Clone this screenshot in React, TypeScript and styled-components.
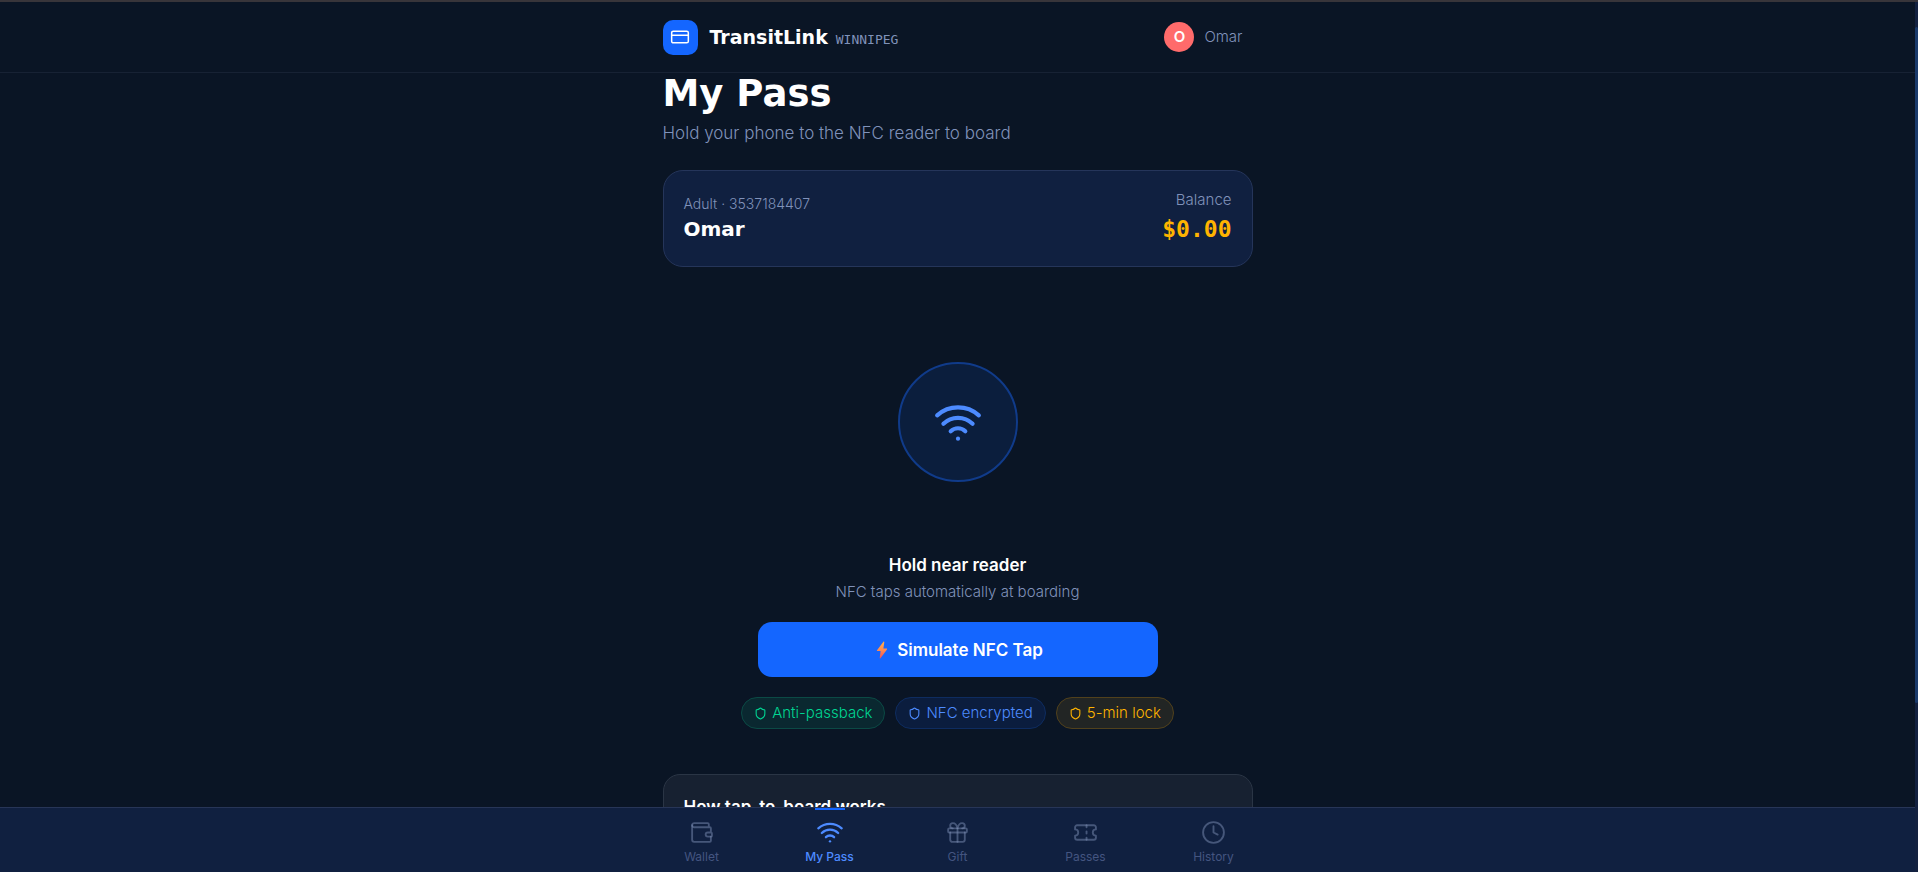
import React from "react";
import styled, { createGlobalStyle } from "styled-components";
import { Clock, CreditCard, Gift, Shield, Ticket, Wallet, Wifi } from "lucide-react";

const display = '"DejaVu Sans", sans-serif';
const mono = '"DejaVu Sans Mono", monospace';
const muted = "#8092ba";

const GlobalStyle = createGlobalStyle`
  *, *::before, *::after { box-sizing: border-box; }
  body {
    margin: 0;
    background: #0a1525;
    color: #ffffff;
    font-family: Inter, sans-serif;
    font-size: 15px;
    line-height: 20px;
    -webkit-font-smoothing: antialiased;
  }
  h1, h2, h3, p { margin: 0; }
`;

const Shell = styled.div`
  display: flex;
  height: 100vh;
  border-top: 2px solid #38353a;
`;

const Screen = styled.div`
  flex: 1;
  min-width: 0;
  display: flex;
  flex-direction: column;
`;

const ScrollRail = styled.div`
  width: 3px;
  padding-top: 25px;
  background: #132140;
`;

const ScrollThumb = styled.div`
  height: 80%;
  border-radius: 2px;
  background: #1a3a6b;
`;

const TopBar = styled.header`
  flex: none;
  border-bottom: 1px solid #172234;
`;

const Column = styled.div`
  width: 100%;
  max-width: 640px;
  margin: 0 auto;
  padding: 0 25px;
`;

const TopBarRow = styled(Column)`
  height: 70px;
  display: flex;
  align-items: center;
  justify-content: space-between;
`;

const Brand = styled.a`
  display: flex;
  align-items: center;
  gap: 12px;
  color: inherit;
  text-decoration: none;
`;

const BrandMark = styled.span`
  width: 35px;
  height: 35px;
  border-radius: 10px;
  background: #1466ff;
  display: grid;
  place-items: center;
`;

const BrandText = styled.span`
  display: flex;
  align-items: baseline;
  gap: 8px;
`;

const BrandName = styled.span`
  font: 700 19px/24px ${display};
`;

const City = styled.span`
  font: 400 13px/16px ${mono};
  color: ${muted};
`;

const Account = styled.button`
  display: flex;
  align-items: center;
  gap: 10px;
  padding: 0 10px 0 0;
  border: 0;
  background: none;
  color: ${muted};
  font: 300 15px/20px Inter, sans-serif;
  cursor: pointer;
`;

const Avatar = styled.span`
  width: 30px;
  height: 30px;
  border-radius: 50%;
  background: #ff6b6b;
  color: #ffffff;
  font-weight: 600;
  display: grid;
  place-items: center;
`;

const Content = styled.main`
  flex: 1;
  min-height: 0;
  overflow-y: auto;
  scrollbar-width: none;
`;

const Title = styled.h1`
  font: 700 37px/42px ${display};
`;

const Subtitle = styled.p`
  margin-top: 6px;
  font-size: 17px;
  line-height: 24px;
  font-weight: 300;
  color: ${muted};
`;

const HolderCard = styled.section`
  margin-top: 25px;
  height: 97px;
  padding: 0 20px 2px;
  border: 1px solid #25355a;
  border-radius: 20px;
  background: #102040;
  display: flex;
  align-items: center;
  justify-content: space-between;
`;

const Stack = styled.div<{ $end?: boolean }>`
  display: flex;
  flex-direction: column;
  align-items: ${(p) => (p.$end ? "flex-end" : "flex-start")};
  gap: 3px;
`;

const Muted = styled.span<{ $small?: boolean }>`
  font-size: ${(p) => (p.$small ? "14px" : "15px")};
  font-weight: 300;
  color: ${muted};
`;

const HolderName = styled.strong`
  font: 700 20px/24px ${display};
`;

const Balance = styled.strong`
  font: 700 23px/32px ${mono};
  color: #ffb400;
`;

const Reader = styled.section`
  display: flex;
  flex-direction: column;
  align-items: center;
  padding: 95px 0 45px;
`;

const ReaderDisc = styled.div`
  width: 120px;
  height: 120px;
  border: 2px solid #103b8a;
  border-radius: 50%;
  background: #0b1e3d;
  color: #4d8bff;
  display: grid;
  place-items: center;
`;

const ReaderTitle = styled.h2`
  margin-top: 71px;
  font-size: 17px;
  line-height: 24px;
  font-weight: 600;
`;

const ReaderHint = styled.p`
  margin-top: 5px;
  font-weight: 300;
  color: ${muted};
`;

const TapButton = styled.button`
  margin-top: 20px;
  width: 400px;
  max-width: 100%;
  height: 55px;
  border: 0;
  border-radius: 14px;
  background: #1466ff;
  color: #ffffff;
  font: 600 17px/24px Inter, sans-serif;
  display: flex;
  align-items: center;
  justify-content: center;
  gap: 5px;
  cursor: pointer;
`;

const Badges = styled.ul`
  margin: 20px 0 0;
  padding: 0;
  list-style: none;
  display: flex;
  flex-wrap: wrap;
  justify-content: center;
  gap: 10px;
`;

const tones = {
  green: { text: "#00d492", fill: "#0a2830", line: "#0b4a45" },
  blue: { text: "#4d8bff", fill: "#0b1d3e", line: "#0e2c60" },
  amber: { text: "#ffb400", fill: "#222524", line: "#51411c" },
};

const Badge = styled.li<{ $tone: keyof typeof tones }>`
  height: 32px;
  padding: 0 12px;
  border: 1px solid ${(p) => tones[p.$tone].line};
  border-radius: 16px;
  background: ${(p) => tones[p.$tone].fill};
  color: ${(p) => tones[p.$tone].text};
  font-weight: 300;
  display: flex;
  align-items: center;
  gap: 5px;
`;

const InfoCard = styled.section`
  min-height: 200px;
  padding: 20px;
  border: 1px solid #2a3545;
  border-radius: 17px;
  background: #172131;
`;

const InfoTitle = styled.h3`
  font-size: 17px;
  line-height: 24px;
  font-weight: 600;
`;

const TabBar = styled.nav`
  flex: none;
  border-top: 1px solid #273557;
  background: #102040;
`;

const Tabs = styled.div`
  max-width: 640px;
  height: 64px;
  margin: 0 auto;
  display: grid;
  grid-template-columns: repeat(5, 1fr);
`;

const Tab = styled.a<{ $active?: boolean }>`
  position: relative;
  padding-top: 10px;
  display: flex;
  flex-direction: column;
  align-items: center;
  gap: 3px;
  font-size: 12px;
  line-height: 16px;
  font-weight: ${(p) => (p.$active ? 500 : 400)};
  color: ${(p) => (p.$active ? "#4d8bff" : "#445580")};
  text-decoration: none;

  &::before {
    content: "";
    display: ${(p) => (p.$active ? "block" : "none")};
    position: absolute;
    top: 0;
    width: 30px;
    height: 2px;
    background: #1466ff;
  }
`;

const TabIcon = styled.span<{ $active?: boolean }>`
  height: 28px;
  display: grid;
  place-items: center;
  color: ${(p) => (p.$active ? "#4d8bff" : "rgba(123, 141, 180, 0.5)")};
`;

const Bolt = () => (
  <svg width="20" height="18" viewBox="-4 0 20 18" aria-hidden="true">
    <defs>
      <linearGradient id="bolt" x1="0" y1="0" x2="0" y2="1">
        <stop offset="0" stopColor="#ffb04a" />
        <stop offset="0.5" stopColor="#ff8a50" />
        <stop offset="1" stopColor="#f0505a" />
      </linearGradient>
    </defs>
    <path
      d="M7.4.8 1 9.3c-.3.4 0 .8.4.8h3.2L3.7 17c-.1.5.5.7.8.3L11 8.5c.3-.4 0-.9-.4-.9H7.4L8.3 1.2c.1-.5-.5-.8-.9-.4z"
      fill="url(#bolt)"
    />
  </svg>
);

const tabs = [
  { label: "Wallet", icon: Wallet },
  { label: "My Pass", icon: Wifi, active: true },
  { label: "Gift", icon: Gift },
  { label: "Passes", icon: Ticket },
  { label: "History", icon: Clock },
];

const badges: { label: string; tone: keyof typeof tones }[] = [
  { label: "Anti-passback", tone: "green" },
  { label: "NFC encrypted", tone: "blue" },
  { label: "5-min lock", tone: "amber" },
];

export default function App() {
  return (
    <>
      <GlobalStyle />
      <Shell>
        <Screen>
          <TopBar>
            <TopBarRow>
              <Brand href="#home">
                <BrandMark>
                  <CreditCard size={20} strokeWidth={1.8} />
                </BrandMark>
                <BrandText>
                  <BrandName>TransitLink</BrandName>
                  <City>WINNIPEG</City>
                </BrandText>
              </Brand>
              <Account type="button">
                <Avatar>O</Avatar>
                Omar
              </Account>
            </TopBarRow>
          </TopBar>

          <Content>
            <Column>
              <Title>My Pass</Title>
              <Subtitle>Hold your phone to the NFC reader to board</Subtitle>

              <HolderCard>
                <Stack>
                  <Muted $small>Adult · 3537184407</Muted>
                  <HolderName>Omar</HolderName>
                </Stack>
                <Stack $end>
                  <Muted>Balance</Muted>
                  <Balance>$0.00</Balance>
                </Stack>
              </HolderCard>

              <Reader>
                <ReaderDisc>
                  <Wifi size={50} strokeWidth={2} />
                </ReaderDisc>
                <ReaderTitle>Hold near reader</ReaderTitle>
                <ReaderHint>NFC taps automatically at boarding</ReaderHint>
                <TapButton type="button">
                  <Bolt />
                  Simulate NFC Tap
                </TapButton>
                <Badges>
                  {badges.map((b) => (
                    <Badge key={b.label} $tone={b.tone}>
                      <Shield size={13} strokeWidth={2} />
                      {b.label}
                    </Badge>
                  ))}
                </Badges>
              </Reader>

              <InfoCard>
                <InfoTitle>How tap-to-board works</InfoTitle>
              </InfoCard>
            </Column>
          </Content>

          <TabBar aria-label="Main">
            <Tabs>
              {tabs.map(({ label, icon: Icon, active }) => (
                <Tab key={label} href={"#" + label} $active={active}>
                  <TabIcon $active={active}>
                    <Icon size={active ? 28 : 25} strokeWidth={active ? 2 : 1.8} />
                  </TabIcon>
                  {label}
                </Tab>
              ))}
            </Tabs>
          </TabBar>
        </Screen>
        <ScrollRail aria-hidden="true">
          <ScrollThumb />
        </ScrollRail>
      </Shell>
    </>
  );
}
